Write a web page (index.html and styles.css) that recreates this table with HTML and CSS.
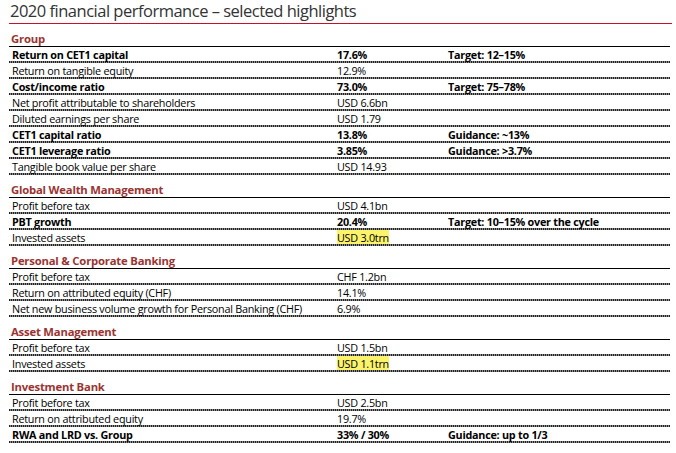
FILE: index.html
```html
<!DOCTYPE html>
<html>
<head>
<meta charset="utf-8">
<link rel="stylesheet" href="styles.css">
</head>
<body>
<div class="page">
  <h1 class="title">2020 financial performance – selected highlights</h1>

  <div class="section">
    <div class="sec-head">Group</div>
    <div class="row bold"><span class="c1">Return on CET1 capital</span><span class="c2">17.6%</span><span class="c3">Target: 12–15%</span></div>
    <div class="row"><span class="c1">Return on tangible equity</span><span class="c2">12.9%</span><span class="c3"></span></div>
    <div class="row bold"><span class="c1">Cost/income ratio</span><span class="c2">73.0%</span><span class="c3">Target: 75–78%</span></div>
    <div class="row"><span class="c1">Net profit attributable to shareholders</span><span class="c2">USD 6.6bn</span><span class="c3"></span></div>
    <div class="row"><span class="c1">Diluted earnings per share</span><span class="c2">USD 1.79</span><span class="c3"></span></div>
    <div class="row bold"><span class="c1">CET1 capital ratio</span><span class="c2">13.8%</span><span class="c3">Guidance: ~13%</span></div>
    <div class="row bold"><span class="c1">CET1 leverage ratio</span><span class="c2">3.85%</span><span class="c3">Guidance: &gt;3.7%</span></div>
    <div class="row"><span class="c1">Tangible book value per share</span><span class="c2">USD 14.93</span><span class="c3"></span></div>
  </div>

  <div class="section">
    <div class="sec-head">Global Wealth Management</div>
    <div class="row"><span class="c1">Profit before tax</span><span class="c2">USD 4.1bn</span><span class="c3"></span></div>
    <div class="row bold"><span class="c1">PBT growth</span><span class="c2">20.4%</span><span class="c3">Target: 10–15% over the cycle</span></div>
    <div class="row"><span class="c1">Invested assets</span><span class="c2"><span class="hl">USD 3.0trn</span></span><span class="c3"></span></div>
  </div>

  <div class="section">
    <div class="sec-head">Personal &amp; Corporate Banking</div>
    <div class="row"><span class="c1">Profit before tax</span><span class="c2">CHF 1.2bn</span><span class="c3"></span></div>
    <div class="row"><span class="c1">Return on attributed equity (CHF)</span><span class="c2">14.1%</span><span class="c3"></span></div>
    <div class="row"><span class="c1">Net new business volume growth for Personal Banking (CHF)</span><span class="c2">6.9%</span><span class="c3"></span></div>
  </div>

  <div class="section">
    <div class="sec-head">Asset Management</div>
    <div class="row"><span class="c1">Profit before tax</span><span class="c2">USD 1.5bn</span><span class="c3"></span></div>
    <div class="row"><span class="c1">Invested assets</span><span class="c2"><span class="hl">USD 1.1trn</span></span><span class="c3"></span></div>
  </div>

  <div class="section">
    <div class="sec-head">Investment Bank</div>
    <div class="row"><span class="c1">Profit before tax</span><span class="c2">USD 2.5bn</span><span class="c3"></span></div>
    <div class="row"><span class="c1">Return on attributed equity</span><span class="c2">19.7%</span><span class="c3"></span></div>
    <div class="row bold"><span class="c1">RWA and LRD vs. Group</span><span class="c2">33% / 30%</span><span class="c3">Guidance: up to 1/3</span></div>
  </div>
</div>
</body>
</html>
```

FILE: styles.css
```css
html, body {
  margin: 0;
  padding: 0;
  background: #ffffff;
}

.page {
  width: 661px;
  margin-left: 9px;
  font-family: "Open Sans", "Noto Sans", sans-serif;
  color: #000;
}

.title {
  margin: 0;
  width: 663px;
  height: 24px;
  box-sizing: border-box;
  border-bottom: 1px solid #c8102e;
  font-size: 16.5px;
  font-weight: 400;
  line-height: 22px;
  color: #333;
  padding-left: 1px;
  letter-spacing: -0.5px;
  white-space: nowrap;
}

.sec-head {
  height: 23px;
  box-sizing: border-box;
  padding-top: 7px;
  padding-left: 2px;
  border-bottom: 1px solid #000;
  font-size: 11.3px;
  line-height: 15px;
  font-weight: 700;
  color: #9a3432;
  letter-spacing: -0.2px;
}

.row {
  display: grid;
  grid-template-columns: 328px 111px 1fr;
  height: 16px;
  box-sizing: border-box;
  padding-top: 1px;
  padding-bottom: 2px;
  background-image: repeating-linear-gradient(90deg, #222 0 1px, #8a8a8a 1px 2px);
  background-size: 100% 2px;
  background-position: left bottom;
  background-repeat: no-repeat;
  font-size: 10.8px;
  line-height: 13px;
  letter-spacing: -0.25px;
  white-space: nowrap;
}

.row.bold {
  font-weight: 700;
}

.c1 {
  padding-left: 3px;
}

.hl {
  display: inline-block;
  background: #fbf36b;
  height: 14px;
  margin-top: -1px;
  line-height: 15px;
}
```
